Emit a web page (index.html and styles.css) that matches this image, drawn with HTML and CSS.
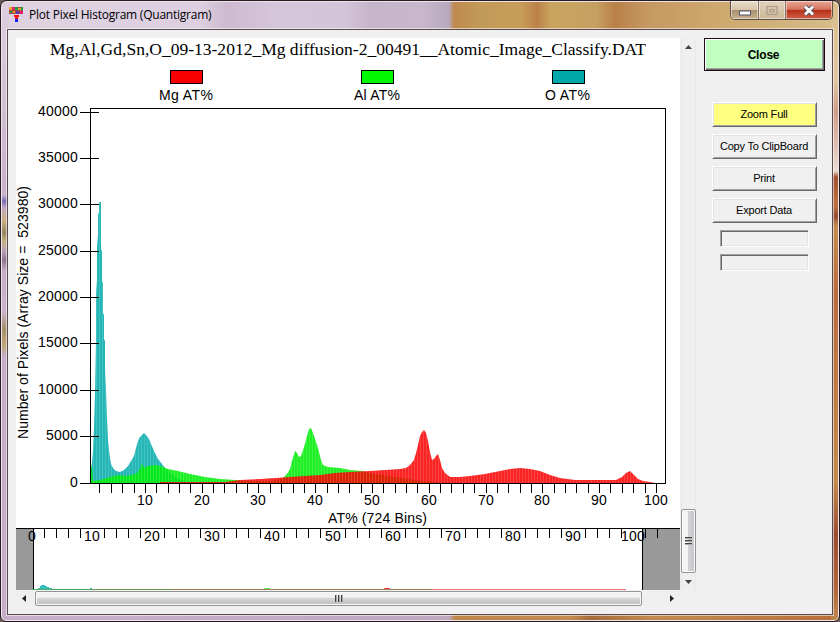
FILE: index.html
```
<!DOCTYPE html>
<html lang="en">
<head>
    <meta charset="UTF-8">
    <title>Plot Pixel Histogram (Quantigram)</title>
    <link rel="stylesheet" href="styles.css">
</head>
<body>
    <div class="window">
        <header class="title-bar">
            <svg class="app-icon" width="14" height="16" viewBox="0 0 14 16" shape-rendering="crispEdges">
                <rect width="14" height="7" fill="#a04a4a"/>
                <path fill="#f0a020" d="M0 0h3v3h-3zM9 1h3v2h-3zM4 4h2v2h-2z"/>
                <path fill="#e02070" d="M3 0h3v3h-3zM11 4h3v3h-3z"/>
                <path fill="#20a040" d="M6 0h3v3h-3zM1 4h2v2h-2zM12 0h2v3h-2z"/>
                <path fill="#6030b0" d="M7 4h3v3h-3z"/>
                <path fill="#ff1010" d="M5 8h5v2h-1v2h-3v-2h-1z"/>
                <path fill="#1020ff" d="M6 12h3v3h-3z"/>
            </svg>
            <h1>Plot Pixel Histogram (Quantigram)</h1>
            <div class="controls">
                <span class="control"><svg width="14" height="13" viewBox="0 0 14 13"><rect x="1.5" y="7" width="11" height="4" fill="#fff" stroke="#555468"/></svg></span>
                <span class="control maximize"><svg width="12" height="13" viewBox="0 0 12 13"><path fill="none" stroke="#a89a8c" stroke-width="1.2" d="M1 2.5h10v8H1zM4 5.5h4v2.5H4z"/></svg></span>
                <span class="control close"><svg width="14" height="13" viewBox="0 0 14 13"><path fill="none" stroke="#555064" stroke-width="4.6" d="M3 2.5l8 8M11 2.5l-8 8"/><path fill="none" stroke="#fff" stroke-width="2.8" d="M3 2.5l8 8M11 2.5l-8 8"/></svg></span>
            </div>
        </header>

        <main class="client">
            <section class="plot">
                <svg id="chart" class="chart" width="664" height="552" viewBox="16 38 664 552">
                    <defs>
                        <pattern id="bins" width="3" height="8" patternUnits="userSpaceOnUse">
                            <rect width="1" height="8" fill="#fff" fill-opacity=".15"/>
                        </pattern>
                    </defs>
                    <text class="chart-title" x="50" y="55" textLength="596" lengthAdjust="spacingAndGlyphs">Mg,Al,Gd,Sn,O_09-13-2012_Mg diffusion-2_00491__Atomic_Image_Classify.DAT</text>
                    <g class="swatches">
                        <rect x="170.5" y="70.5" width="32" height="13" fill="#f90000"/>
                        <rect x="361.5" y="70.5" width="32" height="13" fill="#00f900"/>
                        <rect x="552.5" y="70.5" width="32" height="13" fill="#00a9a9"/>
                    </g>
                    <text x="159" y="100" textLength="54">Mg AT%</text>
                    <text x="354" y="100" textLength="46">Al AT%</text>
                    <text x="545" y="100" textLength="45">O AT%</text>
                    <text transform="translate(27.5 439) rotate(-90)" textLength="253" xml:space="preserve">Number of Pixels (Array Size =  523980)</text>
                    <g id="series"></g>
                    <rect class="frame" x="90.5" y="108.5" width="575" height="375"/>
                    <g id="axes"></g>
                    <text x="328" y="523" textLength="99">AT% (724 Bins)</text>

                    <g shape-rendering="crispEdges">
                        <path fill="#999" d="M16 529h17v61h-17zM643 529h37v61h-37z"/>
                        <path fill="#000" d="M16 528h664v1h-664zM33 529h1v61h-1zM642 529h1v61h-1z"/>
                        <path fill="#39bcbc" d="M38 589v-1h2v-2h1v-1h4v1h2v1h2v1h3v1zM90 589v-1h2v1z"/>
                        <path fill="#4cae62" d="M32 589h60v1h-60z"/>
                        <path fill="#6c9c50" d="M92 589h80v1h-80z"/>
                        <path fill="#a58058" d="M172 589h260v1h-260z"/>
                        <path fill="#ef7774" d="M432 589h194v1h-194z"/>
                        <path fill="#4ee84e" d="M264 588h6v1h-6z"/>
                        <path fill="#fa3c3c" d="M384 588h6v1h-6z"/>
                    </g>
                    <g id="overview"></g>
                </svg>
                <div class="scrollbar vertical">
                    <svg class="arrow" width="7" height="4"><path fill="#444" d="M0 4L3.5 0 7 4z"/></svg>
                    <div class="thumb"><i></i><i></i><i></i></div>
                    <svg class="arrow" width="7" height="4"><path fill="#444" d="M0 0h7L3.5 4z"/></svg>
                </div>
                <div class="scrollbar horizontal">
                    <svg class="arrow" width="4" height="7"><path fill="#222" d="M4 0v7L0 3.5z"/></svg>
                    <div class="thumb"><i></i><i></i><i></i></div>
                    <svg class="arrow" width="4" height="7"><path fill="#222" d="M0 0v7L4 3.5z"/></svg>
                </div>
            </section>

            <aside class="side">
                <button class="btn btn-close">Close</button>
                <button class="btn btn-zoom">Zoom Full</button>
                <button class="btn">Copy To ClipBoard</button>
                <button class="btn">Print</button>
                <button class="btn">Export Data</button>
                <div class="field"></div>
                <div class="field"></div>
            </aside>
        </main>
    </div>
    <script src="chart.js"></script>
</body>
</html>
```
FILE: styles.css
```
/* Window */
body {
    margin: 0;
    background: #6b5a52;
    font-family: "Liberation Sans", Arial, sans-serif;
    color: #000;
}

.window {
    box-sizing: border-box;
    width: 840px;
    height: 622px;
    padding: 0 6px 6px;
    border: 1px solid #241c20;
    border-radius: 7px 7px 6px 6px;
    box-shadow: inset 0 0 0 1px #efe3ec;
    overflow: hidden;
    background:
        linear-gradient(#d9bf8a 0, #e0c6a0 80px, #cf9c85 110px, #eadad4 170px, #a4532f 176px, #c0703c 205px, #954a2f 215px, #c48d50 225px, #bb6a3a 290px, #c38b4c 480px, #9c4c30 535px, #b5683a 590px, #bf8a4c 100%) right / 8px 100% no-repeat,
        linear-gradient(#ddd0e0 0, #c9b4cc 175px, #c9b4cc 194px, #7b6ab8 200px, #c0a8c4 207px, #c8b07c 220px, #97835e 232px, #c8b07c 240px, #b7a0b8 250px, #8d7590 259px, #c4aec8 270px, #c9b4cc 310px, #a5906a 328px, #c0a878 345px, #c4aec8 355px, #c4aec8 100%) left / 8px 100% no-repeat,
        linear-gradient(90deg, #c9b0ca, #bda8c0 448px, #bd8748 454px, #c18c4e 570px, #a66a38 590px, #c18c4e 650px, #b96e3a) bottom / 100% 8px no-repeat,
        linear-gradient(90deg, #ded2e0 0, #ddcfe0 200px, #cdbace 225px, #d6c6da 275px, #d4c4d9 345px, #c6b4ca 370px, #c9b8cd 420px, #b9a9bc 448px, #bf8a4e 453px, #c29a58 480px, #c79e58 520px, #bc8149 536px, #c8a45e 550px, #c6a062 595px, #b98048 614px, #c59862 645px, #cda76c 710px, #d5bd8b 840px);
}

.title-bar {
    display: flex;
    align-items: flex-start;
    height: 28px;
}

.app-icon {
    margin: 6px 6px 0 2px;
}

.title-bar h1 {
    margin: 5px 0 0;
    padding-right: 12px;
    font: 400 12px/17px "Open Sans", sans-serif;
    letter-spacing: -0.23px;
    white-space: nowrap;
}

.controls {
    display: flex;
    margin: 0 0 0 auto;
    height: 18px;
    border: 1px solid #5f4e48;
    border-top: 0;
    border-radius: 0 0 5px 5px;
    overflow: hidden;
}

.control {
    display: flex;
    width: 27px;
    align-items: center;
    justify-content: center;
    border-right: 1px solid #82715f;
    background: linear-gradient(#e7dccb 0, #d8c4a8 48%, #a7906e 52%, #c9b28a 100%);
    box-shadow: inset 0 0 0 1px rgba(255, 255, 255, .5);
}

.control.maximize {
    width: 26px;
    background: linear-gradient(#e0d0bb, #d0b897);
}

.control.close {
    width: 46px;
    border-right: 0;
    background: linear-gradient(#e8a796 0, #d5745e 46%, #b8311b 52%, #cf6145 100%);
}

/* Client area */
.client {
    display: flex;
    box-sizing: border-box;
    width: 826px;
    height: 586px;
    padding: 8px;
    border: 1px solid #5a4a50;
    background: #f0f0f0;
    box-shadow: 0 0 0 1px rgba(255, 255, 255, .55);
}

.plot {
    display: grid;
    grid-template: 553px 16px / 665px 15px;
    width: 680px;
    height: 569px;
}

.chart {
    display: block;
    background: #fff;
}

.chart text {
    font-size: 14px;
}

#axes text,
#overview text {
    letter-spacing: .2px;
}

.chart .chart-title {
    font-family: "Liberation Serif", "Times New Roman", serif;
    font-size: 17px;
}

.swatches rect,
.frame {
    stroke: #000;
    shape-rendering: crispEdges;
}

.frame {
    fill: none;
}

.tick {
    stroke: #000;
    shape-rendering: crispEdges;
}

.middle {
    text-anchor: middle;
}

.end {
    text-anchor: end;
}

/* Scrollbars */
.scrollbar {
    display: flex;
    box-sizing: border-box;
    align-items: center;
    background: #efefef;
}

.scrollbar.vertical {
    flex-direction: column;
    height: 552px;
    padding: 7px 0 6px;
    border-left: 1px solid #e6e6e6;
    border-right: 1px solid #e8e8e8;
}

.scrollbar.horizontal {
    height: 15px;
    padding: 0 7px 0 6px;
}

.thumb {
    display: flex;
    box-sizing: border-box;
    align-items: center;
    justify-content: center;
    gap: 1px;
    border: 1px solid #959595;
    border-radius: 2px;
    box-shadow: inset 0 0 0 1px #f8f8f8;
}

.vertical .thumb {
    flex-direction: column;
    width: 15px;
    height: 64px;
    margin: auto 0 7px;
    background: linear-gradient(90deg, #f4f4f4 45%, #d2d2d6 50%, #c6c6cb);
}

.horizontal .thumb {
    width: 607px;
    height: 15px;
    margin: 0 auto 0 9px;
    background: linear-gradient(#f2f2f2 40%, #d4d4d4 50%, #bebfc1);
}

.vertical .thumb i {
    width: 7px;
    height: 2px;
    background: linear-gradient(#444 50%, #aaa 50%);
}

.horizontal .thumb i {
    width: 2px;
    height: 7px;
    background: linear-gradient(90deg, #444 50%, #aaa 50%);
}

/* Side buttons */
.side {
    display: flex;
    flex-direction: column;
    align-items: center;
    width: 121px;
    margin-left: 8px;
}

.btn {
    box-sizing: border-box;
    flex: none;
    width: 105px;
    height: 25px;
    margin: 0 0 7px;
    padding: 0 1px 2px 0;
    border: 1px solid;
    border-color: #fff #696969 #696969 #fff;
    background: #f0f0f0;
    box-shadow: inset 1px 1px #e3e3e3, inset -1px -1px #a0a0a0;
    font: 11px "Liberation Sans", Arial, sans-serif;
    letter-spacing: -0.2px;
    color: #000;
}

.btn-close {
    width: 121px;
    height: 33px;
    margin-bottom: 31px;
    padding: 0 2px 0 0;
    border: 1px solid #1c0a10;
    background: #c0ffc0;
    box-shadow: inset 1px 1px #fff, inset -1px -1px #696969, inset -2px -2px #a0a0a0;
    font-size: 12px;
    font-weight: 700;
}

.btn-zoom {
    background: #ffff80;
}

.field {
    box-sizing: border-box;
    width: 89px;
    height: 17px;
    margin: 0 0 7px;
    border: 1px solid;
    border-color: #a0a0a0 #fff #fff #a0a0a0;
    box-shadow: inset 1px 1px #696969, inset -1px -1px #e3e3e3;
}
```
FILE: chart.js
```
const SVG = 'http://www.w3.org/2000/svg';
const BASE = 483;

// outline of each distribution, as x,y pairs
const series = [
    { color: '#14b0b0', opacity: 0.93, points: '91,468 92,463 93,450 94,428 95,395 96,340 96,293 97,280 97,247 98,235 98,215 99,212 99,202 101,202 101,249 102,251 102,281 103,283 103,313 104,315 104,339 105,341 105,370 106,390 107,418 108,440 109,450 110,458 111,464 113,468 116,471 120,472 124,470 128,466 131,461 134,456 136,448 138,441 140,437 142,435 144,433 146,435 149,439 151,444 154,451 158,459 162,464 165,468 169,472 173,475 177,478 182,480 188,482 194,483' },
    { color: '#00ee08', opacity: 0.88, points: '91,466 92,468 93,481 100,480 110,477 118,475 125,476 132,475 137,473 140,469 142,463 144,468 148,466 155,465 160,466 168,469 178,471 190,474 205,477 220,479 235,480 250,481 270,481 283,478 287,474 290,469 292,461 295,451 297,453 299,457 301,456 303,450 305,444 307,436 309,429 311,428 313,433 315,439 317,445 319,452 321,460 323,465 328,467 340,468 350,470 362,471 374,474 390,476 402,478 415,480 435,482 460,483' },
    { color: '#f90000', opacity: 0.86, points: '160,482 225,482 240,480 260,479 275,478 290,477 305,476 320,475 335,473 350,472 370,471 385,470 400,469 406,468 410,465 414,460 416,453 418,445 420,436 422,432 424,430 426,433 428,441 430,452 432,460 434,459 436,456 438,454 440,460 442,468 445,473 450,477 460,477 470,476 485,474 500,471 510,469 520,468 530,469 540,471 550,475 560,478 575,480 600,480 616,480 622,477 626,473 630,471 634,475 638,479 643,481 650,482 655,483' }
];

function add(parent, name, attrs, content) {
    const el = document.createElementNS(SVG, name);
    for (const key in attrs) el.setAttribute(key, attrs[key]);
    if (content !== undefined) el.textContent = content;
    document.getElementById(parent).appendChild(el);
}

series.forEach(s => {
    const pts = s.points.split(' ');
    const first = pts[0].split(',')[0];
    const last = pts[pts.length - 1].split(',')[0];
    const d = `M${first} ${BASE}L${pts.join(' ')} ${last},${BASE}z`;
    add('series', 'path', { d, fill: s.color, 'fill-opacity': s.opacity });
    add('series', 'path', { d, fill: 'url(#bins)' });
});

// vertical axis
for (let v = 0; v <= 40000; v += 5000) {
    const y = Math.floor(483 - v * 371 / 40000) + 0.5;
    add('axes', 'path', { class: 'tick', d: `M80 ${y}H${v ? 99 : 91}` });
    add('axes', 'text', { class: 'end', x: 78, y: y + 3.5 }, v);
}

// horizontal axis
for (let v = 2; v <= 100; v += 2) {
    const x = Math.floor(88.6 + v * 5.678) + 0.5;
    add('axes', 'path', { class: 'tick', d: `M${x} 484V493` });
    if (v % 10 === 0) add('axes', 'text', { class: 'middle', x: x - 0.5, y: 505 }, v);
}

// overview ruler, labels take the place of every fifth tick
for (let i = 0; i <= 52; i++) {
    const x = Math.floor(32.5 + i * 12.02) + 0.5;
    if (i % 5 === 0) {
        add('overview', 'text', { class: 'middle', x: i ? x - 0.5 : 32, y: 541 }, i * 2);
    } else {
        add('overview', 'path', { class: 'tick', d: `M${x} 529V538` });
    }
}
```
